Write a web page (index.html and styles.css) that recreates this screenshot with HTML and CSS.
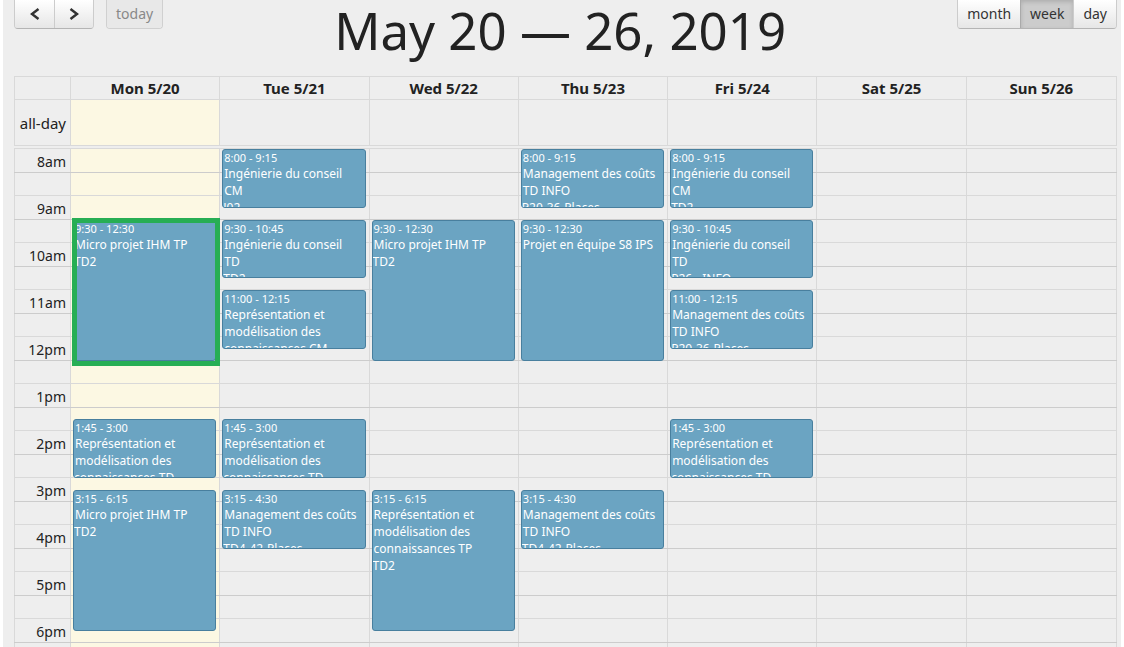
FILE: index.html
```html
<!DOCTYPE html>
<html lang="en">
<head>
<meta charset="utf-8">
<title>May 20 — 26, 2019</title>
<link rel="stylesheet" href="styles.css">
</head>
<body>
<main class="calendar">
  <header class="toolbar">
    <div class="toolbar-side">
      <div class="button-group">
        <button class="button button-arrow" type="button" aria-label="Previous week"><svg class="arrow" viewBox="0 0 10 12"><path d="M8.500 1L2 6l6.500 5"/></svg></button>
        <button class="button button-arrow" type="button" aria-label="Next week"><svg class="arrow" viewBox="0 0 10 12"><path d="M1.500 1L8 6l-6.500 5"/></svg></button>
      </div>
      <div class="button-group group-disabled"><button class="button button-today" type="button" disabled>today</button></div>
    </div>
    <h1 class="title">May 20 — 26, 2019</h1>
    <div class="toolbar-side">
      <div class="button-group">
        <button class="button" type="button">month</button>
        <button class="button button-active" type="button" aria-pressed="true">week</button>
        <button class="button" type="button">day</button>
      </div>
    </div>
  </header>

  <table class="days">
    <thead>
      <tr class="week-row"><th></th><th>Mon 5/20</th><th>Tue 5/21</th><th>Wed 5/22</th><th>Thu 5/23</th><th>Fri 5/24</th><th>Sat 5/25</th><th>Sun 5/26</th></tr>
    </thead>
    <tbody>
      <tr class="week-row all-day"><th class="axis">all-day</th><td class="today"></td><td></td><td></td><td></td><td></td><td></td><td></td></tr>
    </tbody>
  </table>

  <section class="time-grid">
    <div class="week-row backdrop"><div></div><div class="today"></div><div></div><div></div><div></div><div></div><div></div><div></div></div>
    <table class="slots">
      <tbody>
        <tr class="hour"><th class="axis">8am</th></tr><tr class="half"><td></td></tr>
        <tr class="hour"><th class="axis">9am</th></tr><tr class="half"><td></td></tr>
        <tr class="hour"><th class="axis">10am</th></tr><tr class="half"><td></td></tr>
        <tr class="hour"><th class="axis">11am</th></tr><tr class="half"><td></td></tr>
        <tr class="hour"><th class="axis">12pm</th></tr><tr class="half"><td></td></tr>
        <tr class="hour"><th class="axis">1pm</th></tr><tr class="half"><td></td></tr>
        <tr class="hour"><th class="axis">2pm</th></tr><tr class="half"><td></td></tr>
        <tr class="hour"><th class="axis">3pm</th></tr><tr class="half"><td></td></tr>
        <tr class="hour"><th class="axis">4pm</th></tr><tr class="half"><td></td></tr>
        <tr class="hour"><th class="axis">5pm</th></tr><tr class="half"><td></td></tr>
        <tr class="hour"><th class="axis">6pm</th></tr><tr class="half"><td></td></tr>
      </tbody>
    </table>
    <div class="week-row events">
      <div></div>
      <div class="day">
        <article class="event from-0930 long selected"><div class="event-body"><time>9:30 - 12:30</time><p>Micro projet IHM TP</p><p class="place">TD2</p></div></article>
        <article class="event from-1345"><div class="event-body"><time>1:45 - 3:00</time><p>Représentation et modélisation des</p><p class="place">connaissances TD</p></div></article>
        <article class="event from-1515 long"><div class="event-body"><time>3:15 - 6:15</time><p>Micro projet IHM TP</p><p class="place">TD2</p></div></article>
      </div>
      <div class="day">
        <article class="event from-0800"><div class="event-body"><time>8:00 - 9:15</time><p>Ingénierie du conseil<br>CM</p><p class="place">J02</p></div></article>
        <article class="event from-0930"><div class="event-body"><time>9:30 - 10:45</time><p>Ingénierie du conseil<br>TD</p><p class="place">TD2</p></div></article>
        <article class="event from-1100"><div class="event-body"><time>11:00 - 12:15</time><p>Représentation et modélisation des connaissances CM</p></div></article>
        <article class="event from-1345"><div class="event-body"><time>1:45 - 3:00</time><p>Représentation et modélisation des</p><p class="place">connaissances TD</p></div></article>
        <article class="event from-1515"><div class="event-body"><time>3:15 - 4:30</time><p>Management des coûts TD INFO</p><p class="place">TD4-42-Places</p></div></article>
      </div>
      <div class="day">
        <article class="event from-0930 long"><div class="event-body"><time>9:30 - 12:30</time><p>Micro projet IHM TP</p><p class="place">TD2</p></div></article>
        <article class="event from-1515 long"><div class="event-body"><time>3:15 - 6:15</time><p>Représentation et modélisation des connaissances TP</p><p class="place">TD2</p></div></article>
      </div>
      <div class="day">
        <article class="event from-0800"><div class="event-body"><time>8:00 - 9:15</time><p>Management des coûts TD INFO</p><p class="place">P20-36-Places</p></div></article>
        <article class="event from-0930 long"><div class="event-body"><time>9:30 - 12:30</time><p>Projet en équipe S8 IPS</p></div></article>
        <article class="event from-1515"><div class="event-body"><time>3:15 - 4:30</time><p>Management des coûts TD INFO</p><p class="place">TD4-42-Places</p></div></article>
      </div>
      <div class="day">
        <article class="event from-0800"><div class="event-body"><time>8:00 - 9:15</time><p>Ingénierie du conseil<br>CM</p><p class="place">TD2</p></div></article>
        <article class="event from-0930"><div class="event-body"><time>9:30 - 10:45</time><p>Ingénierie du conseil<br>TD</p><p class="place">P26 - INFO</p></div></article>
        <article class="event from-1100"><div class="event-body"><time>11:00 - 12:15</time><p>Management des coûts TD INFO</p><p class="place">P20-36-Places</p></div></article>
        <article class="event from-1345"><div class="event-body"><time>1:45 - 3:00</time><p>Représentation et modélisation des</p><p class="place">connaissances TD</p></div></article>
      </div>
      <div class="day"></div>
      <div class="day"></div>
    </div>
  </section>
</main>
</body>
</html>
```
FILE: styles.css
```css
* { box-sizing: border-box; }

body {
  margin: 0;
  background: #fff;
  color: #222;
  font: 14px/20px "Noto Sans", "Open Sans", sans-serif;
}

.calendar {
  display: flex;
  flex-direction: column;
  height: 100vh;
  margin: 0 3px;
  padding: 0 4px 0 11px;
  overflow: hidden;
  background: #eee;
}

/* Toolbar */
.toolbar {
  display: grid;
  grid-template-columns: auto 1fr auto;
  flex: none;
  height: 76px;
}

.toolbar-side { display: flex; align-items: flex-start; gap: 12px; }

.title {
  margin: 0;
  font-size: 51px;
  font-weight: 400;
  line-height: 60px;
  text-align: center;
}

.button-group {
  display: flex;
  overflow: hidden;
  border: 1px solid #ccc;
  border-top: 0;
  border-bottom-color: #b4b4b4;
  border-radius: 0 0 4px 4px;
}
.group-disabled { border-color: #d0d0d0; }

.button {
  height: 28px;
  padding: 0 9px;
  border: 0;
  background: linear-gradient(#fff, #e6e6e6);
  color: #333;
  font: inherit;
}
.button + .button { border-left: 1px solid #ccc; }
.button-arrow { display: flex; align-items: center; justify-content: center; width: 39px; padding: 0; }
.button-today:disabled { background: #e8e8e8; color: #888; }
.button.button-active {
  border-left-color: #aaa;
  background: #ccc;
  box-shadow: inset 0 2px 4px rgba(0, 0, 0, 0.15);
}

.arrow { width: 10px; height: 12px; fill: none; stroke: #333; stroke-width: 2.500; }

/* Columns shared by the day header, the backdrop and the events */
.week-row {
  display: grid;
  grid-template-columns: 56px repeat(6, 149fr) 150fr;
  border-right: 1px solid #d9d9d9;
}
.week-row > * { min-width: 0; border-left: 1px solid #d9d9d9; }
.today { background: #fcf8e3; }

.days, .days thead, .days tbody { display: block; flex: none; }
.days { font-size: 15px; }
.days th, .days td { padding: 0; border-top: 1px solid #d9d9d9; }
.days th { height: 23px; line-height: 23px; }
.days .all-day { height: 47px; border-bottom: 1px solid #d9d9d9; }
.days .all-day > * { height: 46px; line-height: 46px; }

.days .axis, .slots .axis {
  padding-right: 4px;
  font-weight: 400;
  text-align: right;
}

/* Time grid */
.time-grid {
  display: grid;
  flex: none;
  margin-top: 2px;
}
.time-grid > * { grid-area: 1 / 1; }

.slots { display: block; }
.slots tbody, .slots tr, .slots th, .slots td { display: block; padding: 0; }
.slots .hour { height: 24px; border-top: 1px solid #d9d9d9; }
.slots .half { height: 23px; border-top: 1px solid #ccc; }
.slots .axis { width: 56px; line-height: 26px; }

.events { margin-bottom: -1px; border-color: transparent; }
.events > * { border-color: transparent; }
.day {
  display: grid;
  grid-template-rows: repeat(44, minmax(0, 1fr));
  padding: 1px 3px 0 2px;
}

.event {
  position: relative;
  grid-row-end: span 5;
  contain: size;
  border: 1px solid #487f9e;
  border-radius: 3px;
  background: #6ba4c2;
  color: #fff;
  font-size: 12px;
  line-height: 17px;
}
.event.long { grid-row-end: span 12; }
.from-0800 { grid-row-start: 1; }
.from-0930 { grid-row-start: 7; }
.from-1100 { grid-row-start: 13; }
.from-1345 { grid-row-start: 24; }
.from-1515 { grid-row-start: 30; }

.event-body { height: 100%; overflow: hidden; }
.event time { display: block; padding-left: 1px; font-size: 11px; line-height: 15px; }
.event p { margin: 0; padding-left: 1px; }
.event .place { padding-left: 0; }

.selected::after {
  content: "";
  position: absolute;
  inset: -3px -5px -6px -2px;
  border: 5px solid #27ae54;
}
```
